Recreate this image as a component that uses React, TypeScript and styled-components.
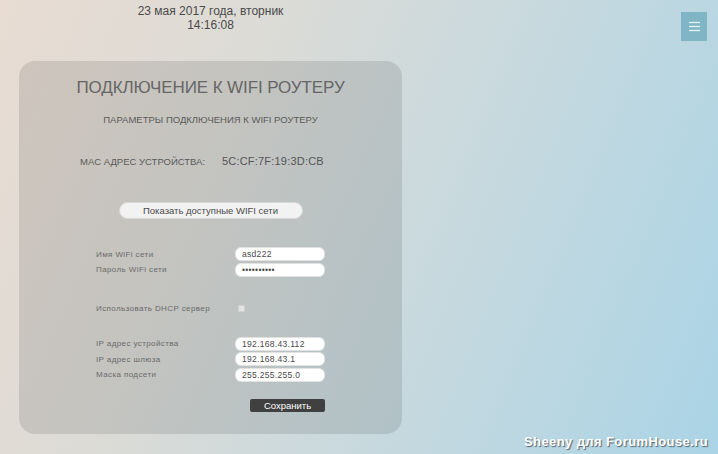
import React from 'react';
import styled, { createGlobalStyle } from 'styled-components';

const GlobalStyle = createGlobalStyle`
  html, body {
    margin: 0;
    padding: 0;
    height: 100%;
  }
  body {
    font-family: "Liberation Sans", Arial, sans-serif;
    background: linear-gradient(112deg, #e8dcd2 0%, #dcdbd6 30%, #c8d9de 60%, #aad4e6 100%);
    min-height: 454px;
    overflow: hidden;
  }
`;

const Page = styled.div`
  position: relative;
  display: flex;
  width: 718px;
  height: 454px;
`;

const Column = styled.div`
  width: 383px;
  margin-left: 19px;
  display: flex;
  flex-direction: column;
`;

const DateBlock = styled.div`
  padding-top: 4px;
  height: 61px;
  box-sizing: border-box;
  text-align: center;
  color: #4a4a4a;
  font-size: 12px;
  line-height: 14px;
`;

const Side = styled.div`
  flex: 1;
  display: flex;
  justify-content: flex-end;
  align-items: flex-start;
  padding: 12px 11px 0 0;
`;

const MenuButton = styled.button`
  width: 26px;
  height: 29px;
  border: none;
  padding: 0;
  background: #80b5c6;
  display: flex;
  align-items: center;
  justify-content: center;
  cursor: pointer;
`;

const Card = styled.div`
  background: linear-gradient(120deg, rgba(110, 105, 100, 0.2) 0%, rgba(100, 110, 115, 0.22) 100%);
  border-radius: 16px;
  height: 373px;
  box-sizing: border-box;
  padding-top: 17px;
  display: flex;
  flex-direction: column;
  align-items: center;
`;

const Title = styled.h1`
  margin: 0;
  font-size: 17px;
  line-height: 20px;
  font-weight: normal;
  color: #666;
  letter-spacing: -0.1px;
`;

const Subtitle = styled.h2`
  margin: 16px 0 0;
  font-size: 9.5px;
  line-height: 12px;
  font-weight: normal;
  color: #5a5a5a;
`;

const MacRow = styled.div`
  margin-top: 28px;
  align-self: stretch;
  padding-left: 61px;
  display: flex;
  align-items: center;
  height: 14px;
  color: #5a5a5a;
`;

const MacLabel = styled.span`
  width: 142px;
  font-size: 9.5px;
`;

const MacValue = styled.span`
  font-size: 11px;
  letter-spacing: 0.2px;
  color: #555;
`;

const ScanButton = styled.button`
  margin-top: 34px;
  width: 184px;
  height: 17px;
  border-radius: 9px;
  border: 1px solid #d8d8d8;
  background: #f2f2f2;
  color: #4a4a4a;
  font-family: inherit;
  font-size: 9.5px;
  padding: 0;
  cursor: pointer;
`;

const Form = styled.div`
  align-self: stretch;
  padding-left: 77px;
  display: flex;
  flex-direction: column;
`;

const Group = styled.div<{ $top: number }>`
  margin-top: ${(p) => p.$top}px;
  display: flex;
  flex-direction: column;
  gap: 1.5px;
`;

const Row = styled.div`
  display: grid;
  grid-template-columns: 139px 90px;
  align-items: center;
  height: 14px;
`;

const Label = styled.label`
  font-size: 8px;
  letter-spacing: 0.4px;
  color: #6a6a6a;
`;

const Field = styled.input`
  box-sizing: border-box;
  width: 90px;
  height: 14px;
  border: 1px solid #e2e2e2;
  border-radius: 6px;
  background: #fff;
  padding: 0 6px;
  font-family: inherit;
  font-size: 8.5px;
  letter-spacing: 0.3px;
  color: #4a4a4a;
  outline: none;
`;

const Check = styled.input`
  appearance: none;
  margin: 0 0 0 3px;
  width: 7px;
  height: 7px;
  background: #e4e4e4;
  border: 1px solid #d0d0d0;
  box-sizing: border-box;
`;

const Actions = styled.div`
  margin-top: 17px;
  width: 229px;
  display: flex;
  justify-content: flex-end;
`;

const SaveButton = styled.button`
  width: 75px;
  height: 13px;
  border: none;
  border-radius: 2px;
  background: #404040;
  color: #fff;
  font-family: inherit;
  font-size: 9.5px;
  line-height: 13px;
  padding: 0;
  cursor: pointer;
`;

const Watermark = styled.div`
  position: absolute;
  right: 10px;
  bottom: 5px;
  color: #fff;
  font-size: 13px;
  font-weight: bold;
  letter-spacing: 0.4px;
  text-shadow: 1px 1px 1px rgba(40, 50, 60, 0.7);
`;

export default function App() {
  return (
    <>
      <GlobalStyle />
      <Page>
        <Column>
          <DateBlock>
            23 мая 2017 года, вторник
            <br />
            14:16:08
          </DateBlock>
          <Card>
            <Title>ПОДКЛЮЧЕНИЕ К WIFI РОУТЕРУ</Title>
            <Subtitle>ПАРАМЕТРЫ ПОДКЛЮЧЕНИЯ К WIFI РОУТЕРУ</Subtitle>
            <MacRow>
              <MacLabel>MAC АДРЕС УСТРОЙСТВА:</MacLabel>
              <MacValue>5C:CF:7F:19:3D:CB</MacValue>
            </MacRow>
            <ScanButton>Показать доступные WIFI сети</ScanButton>
            <Form>
              <Group $top={28}>
                <Row>
                  <Label>Имя WiFi сети</Label>
                  <Field defaultValue="asd222" />
                </Row>
                <Row>
                  <Label>Пароль WiFi сети</Label>
                  <Field type="password" defaultValue="1234567890" />
                </Row>
              </Group>
              <Group $top={25}>
                <Row>
                  <Label>Использовать DHCP сервер</Label>
                  <Check type="checkbox" />
                </Row>
              </Group>
              <Group $top={21}>
                <Row>
                  <Label>IP адрес устройства</Label>
                  <Field defaultValue="192.168.43.112" />
                </Row>
                <Row>
                  <Label>IP адрес шлюза</Label>
                  <Field defaultValue="192.168.43.1" />
                </Row>
                <Row>
                  <Label>Маска подсети</Label>
                  <Field defaultValue="255.255.255.0" />
                </Row>
              </Group>
              <Actions>
                <SaveButton>Сохранить</SaveButton>
              </Actions>
            </Form>
          </Card>
        </Column>
        <Side>
          <MenuButton aria-label="menu">
            <svg width="11" height="11" viewBox="0 0 11 11">
              <g stroke="#e6f2f5" strokeWidth="1.3">
                <line x1="0" y1="1.5" x2="11" y2="1.5" />
                <line x1="0" y1="5.5" x2="11" y2="5.5" />
                <line x1="0" y1="9.5" x2="11" y2="9.5" />
              </g>
            </svg>
          </MenuButton>
        </Side>
        <Watermark>Sheeny для ForumHouse.ru</Watermark>
      </Page>
    </>
  );
}
